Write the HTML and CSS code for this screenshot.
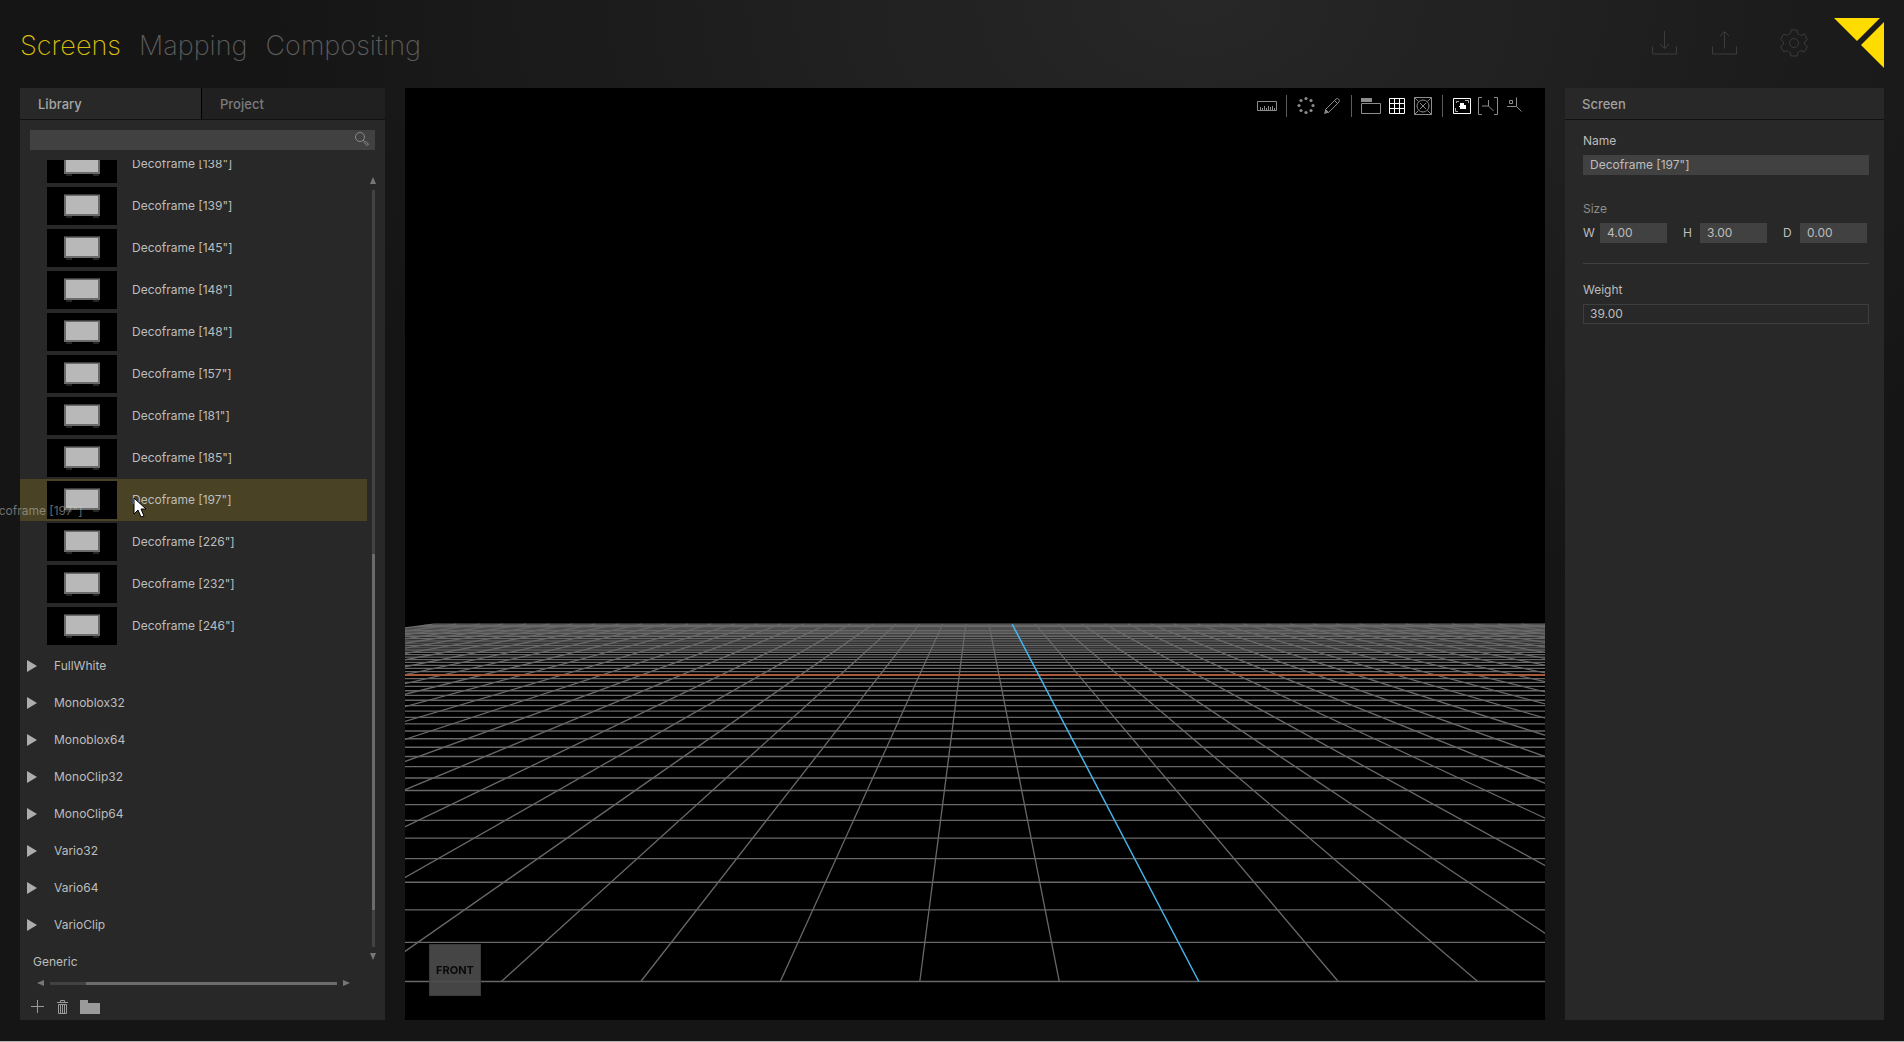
FILE: index.html
```html
<!DOCTYPE html>
<html lang="en">
<head>
<meta charset="utf-8">
<title>Screens</title>
<link rel="stylesheet" href="styles.css">
</head>
<body>
<div class="app">
  <header class="topbar">
    <nav class="modes">
      <a class="mode mode-active" href="#screens">Screens</a>
      <a class="mode" href="#mapping">Mapping</a>
      <a class="mode" href="#compositing">Compositing</a>
    </nav>
    <div class="actions">
      <button class="action" aria-label="Import"><svg width="26" height="26" viewBox="0 0 26 26"><path d="M.5 16.500v7.500h24v-7.500M12.500 1v17M8 14l4.500 4.500L17 14"/></svg></button>
      <button class="action" aria-label="Export"><svg width="26" height="26" viewBox="0 0 26 26"><path d="M.5 16.500v7.500h24v-7.500M12.500 18.500V1.500M8 6l4.500-4.500L17 6"/></svg></button>
      <button class="action action-gear" aria-label="Settings"><svg width="28" height="28" viewBox="-14 -14 28 28"><circle r="4.500"/><path d="M-3-13h6l.8 3.700q1.700.5 2.900 1.700l3.700-1.300 3 5.300-2.900 2.400q.4 1.300 0 2.400l2.900 2.400-3 5.300-3.700-1.300q-1.200 1.200-2.900 1.700L3 13h-6l-.8-3.700q-1.700-.5-2.900-1.700l-3.700 1.300-3-5.300 2.900-2.400q-.4-1.200 0-2.400l-2.900-2.400 3-5.300 3.700 1.300q1.200-1.200 2.900-1.700z"/></svg></button>
      <svg class="logo" width="50" height="50" viewBox="0 0 50 50"><path d="M0 0h46L23 23zM50 4v46L27 27z"/></svg>
    </div>
  </header>

  <main class="workspace">
    <section class="panel library">
      <div class="tabs">
        <button class="tab tab-active">Library</button>
        <button class="tab">Project</button>
      </div>
      <div class="search">
        <input class="search-input" type="search" aria-label="Search library">
        <svg class="search-icon" width="16" height="16" viewBox="0 0 16 16"><circle cx="6" cy="6" r="4.500"/><path d="M9 9l1.500 1.500M10.200 11.500l1.300-1.300 3 3-1.300 1.300z"/></svg>
      </div>
      <div class="browser">
        <div class="list-clip">
          <ul class="list" id="list"></ul>
        </div>
        <div class="vscroll"><i class="arrow up"></i><div class="vtrack"><div class="vthumb"></div></div><i class="arrow down"></i></div>
        <span class="ghost">Decoframe [197"]</span>
      </div>
      <div class="hscroll"><i class="arrow left"></i><div class="htrack"><div class="hthumb"></div></div><i class="arrow right"></i></div>
      <div class="tools">
        <button class="tool" aria-label="Add"><svg width="14" height="14" viewBox="0 0 14 14"><path class="line" d="M0 6.500h13M6.500 0v13"/></svg></button>
        <button class="tool" aria-label="Delete"><svg width="11" height="14" viewBox="0 0 11 14"><path class="line" d="M0 2.500h11M3.500 2V.5h4V2M1.500 4.500h8v9h-8zM3.500 5v8M5.500 5v8M7.500 5v8"/></svg></button>
        <button class="tool" aria-label="New folder"><svg width="20" height="14" viewBox="0 0 20 14"><path class="fill" d="M0 0h8v3h12v11H0z"/></svg></button>
      </div>
    </section>

    <section class="viewport">
      <canvas class="scene" id="scene"></canvas>
      <div class="toolbar">
        <button class="tb" aria-label="Ruler"><svg viewBox="0 0 26 22"><path d="M3.500 6.500h19v9h-19z"/><path d="M6.500 15v-3M8.500 15v-2M10.500 15v-4M12.500 15v-2M14.500 15v-4M16.500 15v-3M18.500 15v-4M20.500 15v-2"/></svg></button>
        <span class="sep"></span>
        <button class="tb" aria-label="Radial array"><svg viewBox="0 0 26 22"><g class="solid"><circle cx="13" cy="3.500" r="1.600"/><circle cx="18" cy="5.500" r="1.600"/><circle cx="20" cy="10.500" r="1.600"/><circle cx="18" cy="15.500" r="1.600"/><circle cx="13" cy="17.500" r="1.600"/><circle cx="8" cy="15.500" r="1.600"/><circle cx="6" cy="10.500" r="1.600"/><circle cx="8" cy="5.500" r="1.600"/></g></svg></button>
        <button class="tb" aria-label="Pencil"><svg viewBox="0 0 26 22"><path d="M6.500 14.500L17 4q1.500-1 2.700.2T20 7L9.500 17.500zM15.500 5.500l3 3"/><path class="solid" d="M5 19l1.500-5 3.500 3.500z"/></svg></button>
        <span class="sep"></span>
        <button class="tb" aria-label="Folder"><svg viewBox="0 0 26 22"><path d="M3.500 8.500h19v10h-19z"/><path class="solid" d="M3 3h11v4H3z"/></svg></button>
        <button class="tb tb-on" aria-label="Grid"><svg viewBox="0 0 26 22"><path d="M5.500 3.500h15v15h-15zM10.500 3v16M15.500 3v16M5 8.500h16M5 13.500h16"/></svg></button>
        <button class="tb" aria-label="Test pattern"><svg viewBox="0 0 26 22"><path d="M4.500 2.500h17v17h-17zM4.500 2.500l4 4M21.500 2.500l-4 4M4.500 19.500l4-4M21.500 19.500l-4-4M10 8l6 6M16 8l-6 6"/><circle cx="13" cy="11" r="6"/></svg></button>
        <span class="sep"></span>
        <button class="tb tb-on" aria-label="Fit to view"><svg viewBox="0 0 26 22"><path d="M4.500 3.500h17v15h-17z"/><path class="corners" d="M7.500 8V6.500H10M16 5.500h3.500V8M6.500 13v3.500H9"/><path class="solid" d="M11 8h4v2h2v4h-6v-2h-1v-1h1z"/></svg></button>
        <button class="tb" aria-label="Frame axes"><svg viewBox="0 0 26 22"><path d="M7 2.500H3.500v17H7M19 2.500h3.500v17H19M13.500 5v6H7M13.500 11l5 5"/></svg></button>
        <button class="tb" aria-label="Origin"><svg viewBox="0 0 26 22"><path d="M8.500 5.500h3v3h-3zM15.500 2.500v9H6M15.500 11.500l5 5"/></svg></button>
      </div>
      <div class="cube">FRONT</div>
    </section>

    <section class="panel props">
      <h2 class="props-title">Screen</h2>
      <form class="form">
        <label class="label" for="name">Name</label>
        <input class="field" id="name" value='Decoframe [197"]'>
        <div class="label label-size">Size</div>
        <div class="dims">
          <label class="dim"><span class="dim-key">W</span><input class="field" value="4.00"></label>
          <label class="dim"><span class="dim-key">H</span><input class="field" value="3.00"></label>
          <label class="dim"><span class="dim-key">D</span><input class="field" value="0.00"></label>
        </div>
        <hr class="rule">
        <label class="label" for="weight">Weight</label>
        <input class="field field-outline" id="weight" value="39.00">
      </form>
    </section>
  </main>
</div>
<script src="app.js"></script>
</body>
</html>
```
FILE: styles.css
```css
* { box-sizing: border-box; }
body {
  margin: 0;
  background: #151515;
  color: #bdbdbd;
  font: 12px/16px Inter, "Liberation Sans", sans-serif;
}
button { background: none; border: 0; padding: 0; margin: 0; font: inherit; color: inherit; }
svg { display: block; fill: none; stroke: currentColor; }

.app {
  display: grid;
  grid-template-rows: 88px minmax(0, 1fr);
  height: 100vh;
  min-height: 700px;
  border-bottom: 1px solid #b4b4b4;
  background: radial-gradient(ellipse 50% 60% at 63% 0, #272727, #151515);
}
.topbar { display: flex; justify-content: space-between; padding: 0 20px; }
.modes { display: flex; gap: 18px; padding-top: 28px; }
.mode { font-size: 27px; line-height: 36px; font-weight: 200; color: #5c5c5c; text-decoration: none; }
.mode-active { color: #d9be0c; }
.actions { display: flex; padding-top: 18px; align-items: flex-start; }
.action { color: #3c3c3c; margin: 12px 34px 0 0; }
.action-gear { margin: 11px 26px 0 8px; }
.logo { fill: #ffdc00; stroke: none; }

.workspace {
  display: grid;
  grid-template-columns: 365px minmax(0, 1fr) 319px;
  gap: 20px;
  padding: 0 20px 21px;
}
.panel { background: #282828; min-height: 0; }
.library { display: flex; flex-direction: column; }
.tabs { display: grid; grid-template-columns: 182px 1fr; border-bottom: 1px solid #111; }
.tab { height: 31px; padding: 0 18px; text-align: left; font-size: 13px; font-weight: 500; color: #7c7c7c; background: #202020; }
.tab-active { background: #282828; color: #a6a6a6; border-right: 1px solid #000; }
.search { position: relative; margin: 10px; height: 20px; }
.search-input { display: block; width: 100%; height: 20px; border: 0; padding: 0 28px 0 7px; background: #414141; color: inherit; font: inherit; }
.search-icon { position: absolute; right: 5px; top: 1px; color: #8a8a8a; }

.browser { position: relative; display: flex; flex: 1; min-height: 0; }
.list-clip { flex: 1; overflow: hidden; }
.list { list-style: none; margin: -17px 0 0; padding: 0; }
.item { position: relative; display: flex; align-items: center; gap: 15px; height: 42px; padding-left: 27px; white-space: nowrap; }
.item-selected { background: #494224; }
.thumb { width: 70px; height: 38px; background: #000; stroke: none; }
.group { display: flex; align-items: center; gap: 17px; height: 37px; padding-left: 7px; }
.group::before { content: ""; border: solid transparent; border-width: 6px 0 6px 10px; border-left-color: #adadad; }
.leaf { display: flex; align-items: center; height: 37px; padding-left: 13px; }
.ghost { position: absolute; left: -37px; top: 343px; color: #c8c8c8; opacity: .5; white-space: nowrap; }
.cursor { position: absolute; left: 113px; top: 18px; }

.vscroll { display: flex; flex-direction: column; align-items: center; gap: 6px; width: 18px; padding: 17px 6px 20px 0; }
.vtrack { flex: 1; width: 3px; background: #424242; }
.vthumb { width: 3px; height: 47%; margin-top: 364px; background: #6b6b6b; }
.hscroll { display: flex; align-items: center; gap: 6px; height: 6px; margin: 0 35px 0 17px; }
.htrack { flex: 1; height: 3px; background: #424242; }
.hthumb { height: 3px; margin-left: 36px; background: #6b6b6b; }
.arrow { border: solid transparent; }
.up { border-width: 0 3px 7px; border-bottom-color: #777; }
.down { border-width: 7px 3px 0; border-top-color: #777; }
.left { border-width: 3px 7px 3px 0; border-right-color: #777; }
.right { border-width: 3px 0 3px 7px; border-left-color: #777; }
.tools { display: flex; gap: 12px; height: 34px; padding: 14px 11px 0; color: #9a9a9a; }
.tool { height: 14px; }
.fill { fill: currentColor; stroke: none; }

.viewport { position: relative; background: #000; min-height: 0; }
.scene { position: absolute; inset: 0; width: 100%; height: 100%; }
.toolbar { position: absolute; top: 7px; right: 18px; display: flex; color: #8c8c8c; }
.tb, .tb svg { width: 26px; height: 22px; }
.tb-on { color: #fff; }
.corners { stroke: #aaa; }
.solid { fill: currentColor; stroke: none; }
.sep { width: 13px; height: 22px; background: linear-gradient(#5c5c5c, #5c5c5c) center / 1px 100% no-repeat; }
.cube { position: absolute; left: 24px; bottom: 24px; width: 52px; height: 52px; line-height: 50px; text-align: center; font-size: 11px; font-weight: 700; color: #0a0a0a; background: rgba(76, 76, 76, .9); border: 1px solid #3a3a3a; }

.props-title { margin: 0; height: 32px; padding-left: 17px; font-size: 13px; line-height: 32px; font-weight: 500; color: #a0a0a0; border-bottom: 1px solid #111; }
.form { padding: 13px 15px 0 18px; }
.label { display: block; margin-bottom: 6px; }
.label-size { margin: 26px 0 6px; color: #8c8c8c; }
.field { display: block; width: 100%; min-width: 0; height: 20px; padding: 0 7px 1px; border: 0; background: #414141; color: #bdbdbd; font: inherit; }
.field-outline { background: none; border: 1px solid #3e3e3e; padding: 0 6px 1px; }
.dims { display: grid; grid-template-columns: repeat(3, 1fr); gap: 16px; margin-right: 2px; }
.dim { display: flex; align-items: center; }
.dim-key { flex: 0 0 17px; }
.rule { margin: 20px 0 18px; border: 0; border-top: 1px solid #404040; }
```
FILE: app.js
```js
const list = document.getElementById("list");
const thumb = `<svg class="thumb" viewBox="0 0 70 38"><path fill="#242424" d="M19 29h6v2h-6zM46 29h6v2h-6z"/><path fill="#6a6a6a" d="M17 8h36v21H17z"/><path fill="#3c3c3c" d="M17 7h36v1H17z"/><path fill="#b8b8b8" d="M19 9h32v18H19z"/></svg>`;
const cursor = `<svg class="cursor" width="14" height="22" viewBox="0 0 14 22"><path fill="#fff" stroke="#000" d="M1 1v16l4-4 3 7 3-1-3-7h5z"/></svg>`;
const sizes = [138, 139, 145, 148, 148, 157, 181, 185, 197, 226, 232, 246];
const groups = ["FullWhite", "Monoblox32", "Monoblox64", "MonoClip32", "MonoClip64", "Vario32", "Vario64", "VarioClip"];

list.innerHTML = sizes.map(size => {
  const name = `Decoframe [${size}"]`;
  const selected = size === 197;
  return `<li class="item${selected ? " item-selected" : ""}">${thumb}<span>${name}</span>` +
    (selected ? cursor : "") + `</li>`;
}).join("") +
  groups.map(name => `<li class="group">${name}</li>`).join("") +
  `<li class="leaf">Generic</li>`;

// Floor grid: 50 x 50 cells seen in perspective, with the two axes in colour.
const scene = document.getElementById("scene");
function draw() {
  const w = scene.width = scene.clientWidth;
  const h = scene.height = scene.clientHeight;
  const ctx = scene.getContext("2d");
  const vx = w / 2, vy = h * 0.4989;
  const k = h * 4.575;
  const depth = n => k / (9.95 + n);
  const near = depth(0), far = depth(50);
  const xAt = (i, d) => vx + d * (0.5222 + i * 0.3255);
  const line = (x1, y1, x2, y2, color) => {
    ctx.strokeStyle = color;
    ctx.beginPath();
    ctx.moveTo(x1, vy + y1);
    ctx.lineTo(x2, vy + y2);
    ctx.stroke();
  };
  ctx.lineWidth = 1.3;
  for (let n = 0; n <= 50; n++) {
    const d = depth(n);
    line(xAt(-25, d), d, xAt(25, d), d, "#686868");
  }
  for (let i = -25; i <= 25; i++) {
    if (i) line(xAt(i, far), far, xAt(i, near), near, "#686868");
  }
  ctx.lineWidth = 2;
  line(0, depth(25), w, depth(25), "#a8583c");
  ctx.lineWidth = 1.5;
  line(xAt(0, far), far, xAt(0, near), near, "#45b5ea");
}
draw();
window.addEventListener("resize", draw);
```
